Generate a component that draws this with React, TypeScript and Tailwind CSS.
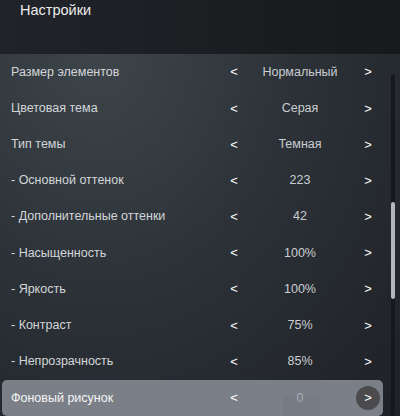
import React from 'react'

interface Setting {
    label: string
    value: string
}

const settings: Setting[] = [
    { label: 'Размер элементов', value: 'Нормальный' },
    { label: 'Цветовая тема', value: 'Серая' },
    { label: 'Тип темы', value: 'Темная' },
    { label: '- Основной оттенок', value: '223' },
    { label: '- Дополнительные оттенки', value: '42' },
    { label: '- Насыщенность', value: '100%' },
    { label: '- Яркость', value: '100%' },
    { label: '- Контраст', value: '75%' },
    { label: '- Непрозрачность', value: '85%' },
]

function Row({ label, value }: Setting) {
    return (
        <div className="ml-[2px] flex h-[36.2px] w-[381px] items-center text-[12.5px]">
            <span className="flex-1 pl-[9px] text-[#d3d6d9]">{label}</span>
            <span className="w-[26px] text-center text-[13px] font-medium text-white">&lt;</span>
            <span className="w-[106px] text-center text-[#c9cdd1]">{value}</span>
            <span className="w-[30px] text-center text-[13px] font-medium text-white">&gt;</span>
        </div>
    )
}

export default function App() {
    return (
        <div
            className="relative h-[416px] w-[400px] overflow-hidden bg-[#1f2227]"
            style={{ fontFamily: '"Liberation Sans", Arial, sans-serif' }}
        >
            {/* Header */}
            <div className="h-[54px] bg-gradient-to-r from-[#202328] to-[#17191c] pl-5 pt-0 text-[14.5px] leading-[20px] text-[#ececec]">
                Настройки
            </div>

            {/* Settings list */}
            <div className="h-[362px] bg-[radial-gradient(ellipse_at_25%_0%,#3d454b_0%,#2c3238_45%,#1e2126_100%)]">
                {settings.map((s) => (
                    <Row key={s.label} {...s} />
                ))}

                {/* Selected row */}
                <div className="ml-[2px] mt-[0.5px] flex h-[36px] w-[381px] items-center rounded-[5px] bg-[#7b8088] text-[12.5px]">
                    <span className="flex-1 pl-[9px] text-[#f4f4f4]">Фоновый рисунок</span>
                    <span className="w-[26px] text-center text-[13px] font-medium text-white">&lt;</span>
                    <span className="relative flex h-full w-[106px] items-center justify-center">
                        <span className="absolute bottom-0 left-[36px] h-[21px] w-[37px] bg-[#777b83]" />
                        <span className="relative text-[#a9adb3]">0</span>
                    </span>
                    <span className="flex w-[30px] justify-center">
                        <span className="flex h-[24px] w-[24px] items-center justify-center rounded-full bg-[#4b4b4d] text-[13px] font-medium text-white">&gt;</span>
                    </span>
                </div>
            </div>

            {/* Scrollbar */}
            <div className="absolute left-[391px] top-[75px] h-[341px] w-[4px] bg-[#16181b]">
                <div className="absolute left-0 top-[127px] h-[97px] w-[4px] rounded-sm bg-[#b3b7bb]" />
            </div>
        </div>
    )
}
